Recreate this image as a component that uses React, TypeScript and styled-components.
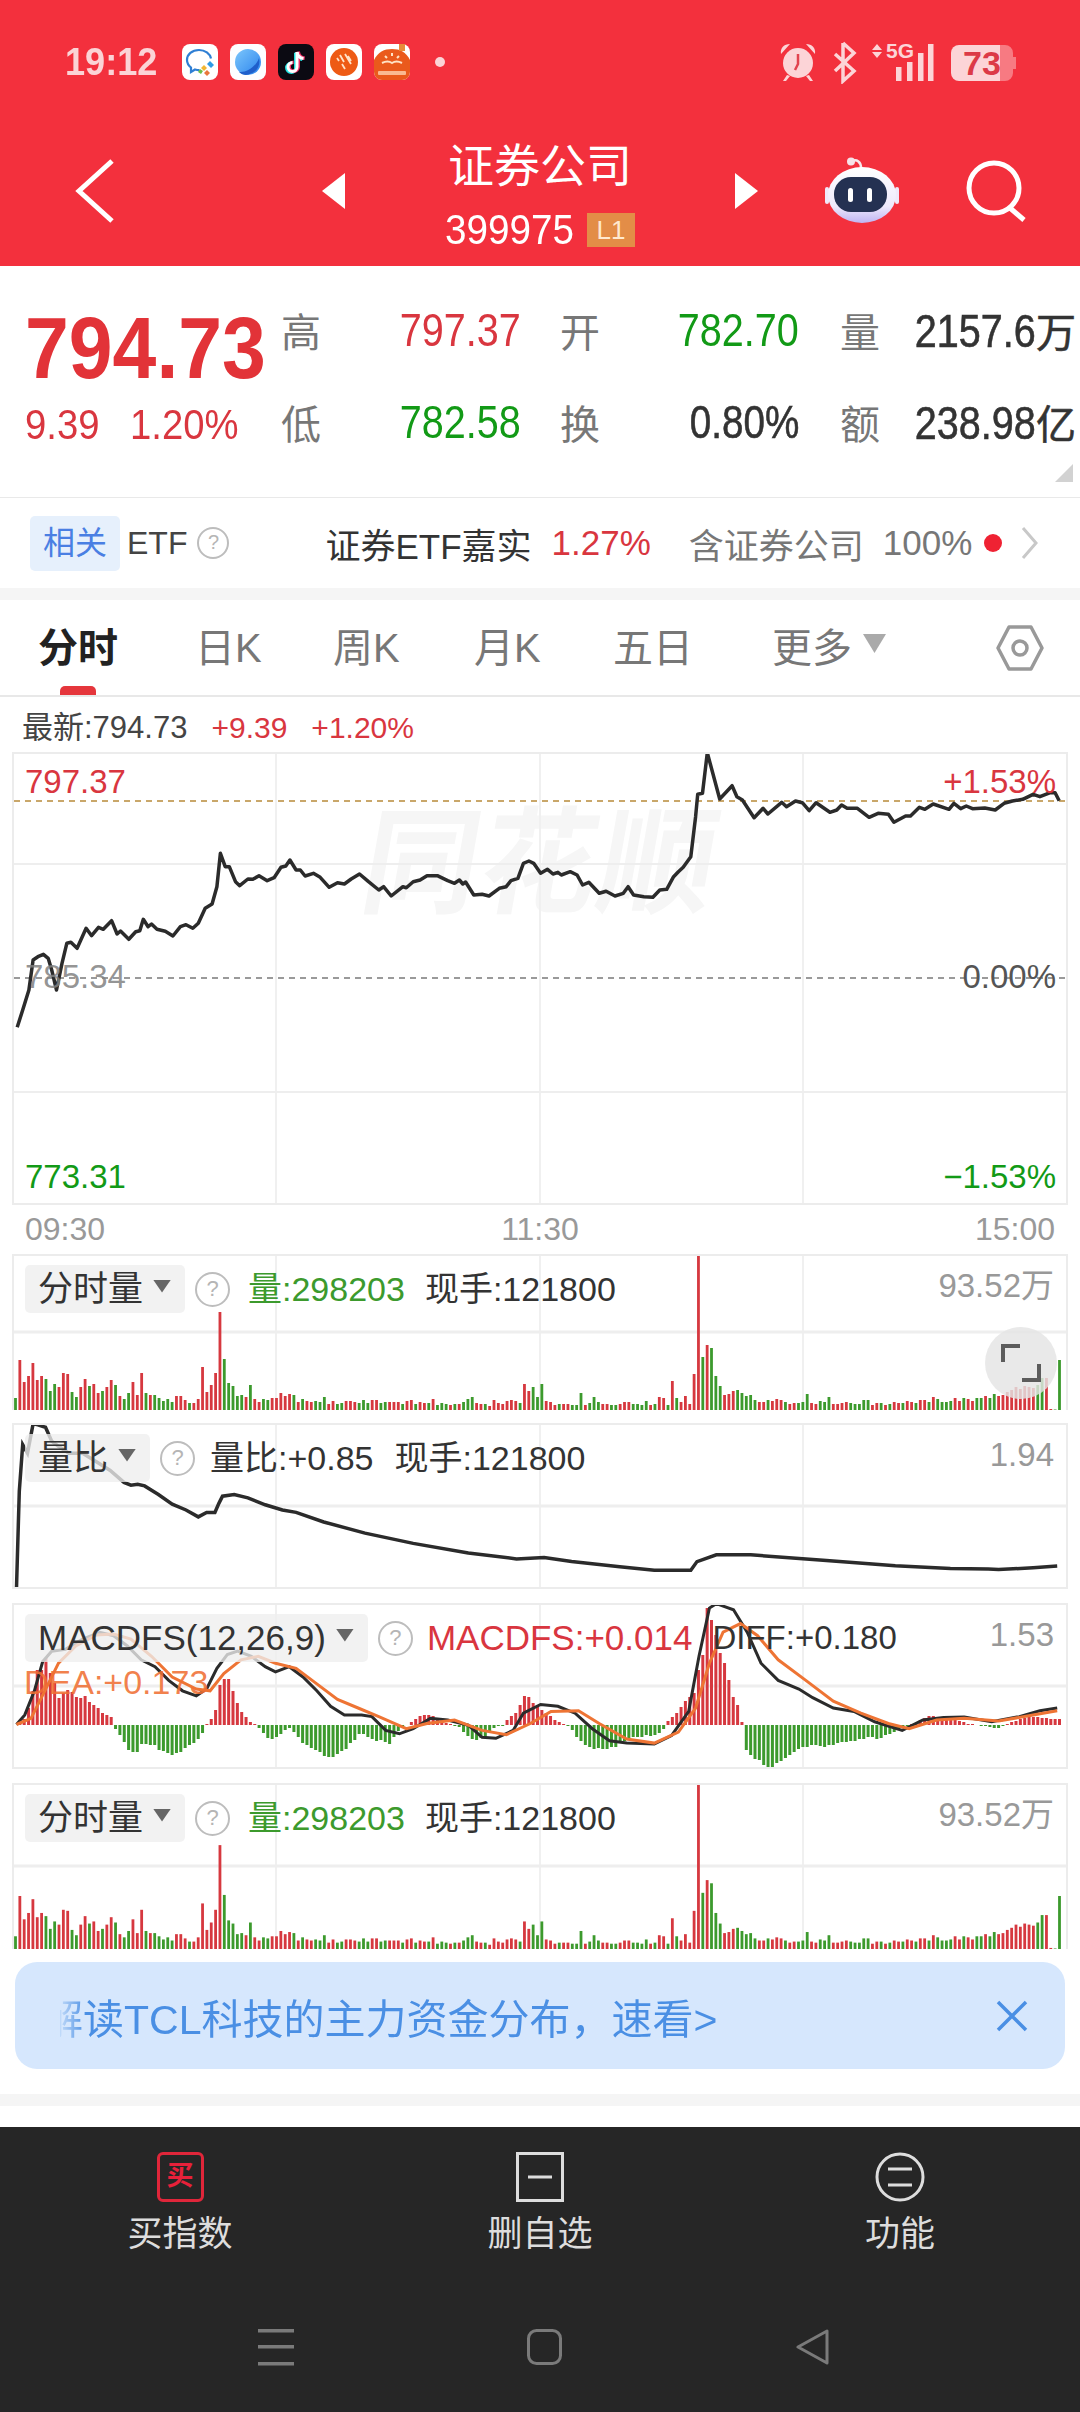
import React from "react";
import styled, { createGlobalStyle } from "styled-components";

const SANS = '"Liberation Sans", "Noto Sans CJK SC", sans-serif';
const RED = "#d9363f";
const GREEN = "#129a16";
const BAR_RED = "#d6383f";
const BAR_GREEN = "#3c9a2d";

// volume per minute, positive = red bar, negative = green bar
const VOL = [
  -12, 50, 28, 34, 47, 30, 34, -31, -19, -26, 23, 37, 36, -18, -13, 23, 31, -24, 26, 17, -19, 23, 30, -25, 14, -11, -17, 28, 15, 37,
  -17, 15, -15, -12, -9, -11, -8, 14, 14, 10, -7, 7, 11, 43, 18, 25, 37, 98, -51, -27, -24, -14, -15, 13, -25, 11, 8, -11, -10, 12,
  12, 17, 14, 16, -15, 8, -11, 9, 8, -9, -8, -13, 6, 9, -6, -7, 9, 9, 8, -7, -10, -7, 10, 10, -7, -8, 8, 8, 8, -6,
  9, 10, -6, 8, 7, -7, 11, -5, -7, -6, 5, -6, 6, -8, -11, -13, 7, 6, -6, 4, 10, 7, 6, 9, 10, 9, -7, 26, 19,
  -23, -13, -26, 9, 8, 5, -6, 6, 6, -5, -5, -17, 5, -7, -13, -8, 6, 6, -5, -5, 6, 8, 8, -6, -6, -5, -9, 5, -6, 13, 12, -5, 29, -12, 8, 14, 6, 36, 155,
  -53, 65, -62, -34, -24, 15, 16, 19, -20, -17, -14, -15, -10, 8, 8, -10, 9, 11, 10, -8, 6, 7, -7, -8, -16, 7, 6, -9, -8, -13, 6, 6, 7, 8, -7, -6, -6,
  -10, -10, 5, 7, -7, 5, -6, 8, 7, -7, 9, 8, -7, 10, 10, -8, 13, -11, -8, -8, -9, 12, 9, -12, 11, 9, -12, -12, 14, -12, -16, 14, 15, 18, 20, 23, 21,
  24, 23, 22, -25, -32, 32, 1, -0.5, -50,
];

const MACD = [
  0, 2, 6, 17, 34, 55, 55, 67, 52, 42, 27, 32, 35, 33, 28, 27, 29, 23, 20, 17, 12, 10, 8, -4, -10, -17, -25, -27, -27, -19,
  -19, -20, -20, -25, -26, -28, -30, -28, -27, -23, -20, -18, -14, -8, 1, 6, 15, 40, 46, 46, 34, 22, 13, 8, 3, 1, -3, -8, -13, -14,
  -12, -9, -5, -3, -7, -12, -18, -20, -23, -25, -27, -31, -32, -32, -29, -26, -24, -18, -15, -9, -9, -12, -14, -16, -15, -17, -19, -12, -6, -2,
  0, 3, 6, 9, 10, 10, 9, 7, 4, 2, 1, -1, -2, -7, -11, -14, -15, -13, -12, -7, -3, -1, -1, 5, 9, 12, 20, 29, 28, 22,
  20, 15, 12, 9, 5, 3, 1, -1, -5, -12, -16, -20, -22, -24, -23, -24, -24, -22, -22, -18, -16, -14, -12, -12, -12, -10, -11, -10, -8, -4,
  4, 8, 12, 18, 24, 28, 32, 55, 70, 117, 105, 90, 72, 62, 45, 28, 20, 3, -25, -30, -34, -35, -40, -42, -43, -38, -36, -33, -30, -27,
  -24, -22, -22, -20, -20, -21, -22, -20, -20, -18, -17, -17, -16, -16, -14, -14, -12, -12, -14, -13, -10, -9, -7, -5, -3, -1, 1, 2, 5, 7,
  9, 9, 8, 8, 7, 7, 5, 4, 3, 1, 1, 0, -1, -1, -2, -3, -3, -1, 1, 3, 4, 6, 7, 8, 8, 8, 7, 7, 6, 6, 6,
];

const PRICE_LINE = [
  [25, 892], [33, 840], [42, 780], [48, 690], [55, 680], [63, 673], [70, 685], [75, 720], [82, 780], [90, 700], [97, 640], [103, 637], [112, 655],
  [125, 595], [133, 617], [143, 592], [150, 598], [162, 572], [170, 612], [175, 603], [187, 628], [197, 605], [203, 602], [208, 568], [215, 590],
  [220, 582], [228, 598], [240, 604], [251, 618], [262, 590], [270, 584], [280, 595], [288, 580], [298, 535], [308, 522], [315, 470], [320, 370],
  [327, 410], [333, 410], [342, 455], [348, 467], [360, 447], [367, 448], [376, 437], [388, 452], [398, 443], [408, 412], [415, 408], [421, 390],
  [430, 420], [436, 420], [443, 438], [455, 430], [465, 442], [478, 472], [490, 458], [500, 462], [510, 447], [522, 432], [535, 455], [550, 480],
  [557, 470], [568, 498], [585, 470], [590, 473], [600, 455], [610, 450], [620, 437], [635, 437], [650, 452], [660, 460], [667, 450], [672, 462],
  [676, 456], [688, 495], [700, 493], [710, 498], [725, 475], [735, 470], [742, 452], [752, 445], [760, 400], [768, 393], [775, 400], [785, 430],
  [795, 418], [803, 432], [810, 427], [815, 435], [828, 425], [838, 435], [846, 465], [855, 457], [870, 490], [880, 484], [893, 498], [905, 490],
  [912, 470], [920, 495], [935, 500], [948, 502], [958, 480], [968, 478], [978, 440], [985, 425], [992, 412], [1003, 380], [1010, 260], [1013, 193],
  [1020, 190], [1027, 68], [1035, 130], [1045, 207], [1063, 167], [1070, 200], [1078, 210], [1095, 263], [1108, 235], [1115, 252], [1135, 217],
  [1142, 230], [1155, 213], [1165, 218], [1175, 242], [1185, 218], [1205, 247], [1215, 240], [1222, 225], [1230, 235], [1245, 235], [1262, 262],
  [1275, 250], [1290, 253], [1298, 277], [1315, 258], [1322, 258], [1335, 232], [1343, 238], [1355, 222], [1378, 238], [1385, 220], [1395, 236],
  [1403, 228], [1412, 236], [1430, 234], [1445, 240], [1458, 220], [1470, 213], [1485, 208], [1500, 193], [1510, 200], [1525, 188], [1532, 188], [1538, 212],
];

const RATIO_LINE = [
  [24, 980], [28, 700], [33, 565], [40, 590], [48, 505], [55, 508], [66, 515], [75, 555], [85, 570], [100, 590], [120, 590], [140, 615], [160, 640],
  [180, 675], [190, 683], [200, 680], [210, 685], [230, 710], [250, 738], [270, 755], [288, 775], [300, 762], [312, 762], [318, 735], [323, 715],
  [340, 710], [360, 720], [385, 740], [410, 755], [430, 762], [470, 790], [530, 822], [600, 852], [680, 880], [750, 897], [790, 893], [830, 905],
  [900, 920], [950, 930], [1003, 930], [1012, 905], [1040, 885], [1090, 885], [1200, 902], [1300, 917], [1380, 925], [1435, 926], [1450, 928], [1500, 923], [1535, 918],
];

const DIFF_LINE = [
  [24, 1378], [36, 1350], [50, 1280], [62, 1195], [75, 1165], [95, 1160], [120, 1130], [145, 1110], [165, 1120], [185, 1150], [205, 1190], [225, 1210],
  [245, 1250], [265, 1280], [285, 1295], [300, 1275], [315, 1215], [330, 1175], [345, 1165], [365, 1180], [385, 1210], [400, 1225], [420, 1210], [440, 1240],
  [460, 1280], [480, 1325], [500, 1350], [525, 1350], [540, 1355], [560, 1395], [580, 1405], [600, 1390], [625, 1360], [650, 1365], [680, 1380], [700, 1415],
  [720, 1418], [745, 1395], [760, 1345], [785, 1320], [810, 1325], [835, 1345], [860, 1390], [885, 1425], [910, 1432], [950, 1435], [975, 1410], [1000, 1340],
  [1015, 1180], [1030, 1040], [1040, 1027], [1065, 1045], [1085, 1110], [1105, 1200], [1130, 1250], [1160, 1275], [1180, 1300], [1210, 1330], [1240, 1340],
  [1270, 1370], [1310, 1395], [1340, 1365], [1370, 1358], [1400, 1356], [1440, 1370], [1480, 1355], [1510, 1338], [1535, 1330],
];

const DEA_LINE = [
  [24, 1378], [45, 1360], [65, 1280], [85, 1200], [110, 1150], [140, 1118], [165, 1115], [190, 1130], [220, 1180], [250, 1240], [285, 1275], [305, 1280],
  [325, 1230], [350, 1190], [375, 1180], [400, 1200], [430, 1215], [460, 1260], [490, 1305], [520, 1330], [550, 1355], [590, 1390], [620, 1375], [660, 1365],
  [700, 1395], [735, 1408], [770, 1375], [800, 1340], [840, 1338], [870, 1375], [910, 1420], [950, 1432], [985, 1400], [1010, 1330], [1030, 1200], [1050, 1110],
  [1075, 1085], [1100, 1120], [1130, 1190], [1170, 1250], [1210, 1310], [1250, 1345], [1290, 1375], [1320, 1390], [1360, 1365], [1400, 1360], [1450, 1368],
  [1500, 1350], [1535, 1338],
];

// traced from a 1.452x / fy zoom of the page, back to page coordinates
const toPoints = (list: number[][], y0: number, fy: number) =>
  list.map(([x, y]) => `${(x / 1.452).toFixed(1)},${(y0 + y / fy).toFixed(1)}`).join(" ");

const barX = (i: number) => 15.5 + 4.35 * i;

const GlobalStyle = createGlobalStyle`
  html, body { margin: 0; padding: 0; background: #fff; }
  body { font-family: ${SANS}; }
`;

const Page = styled.div`
  width: 1080px;
  height: 2412px;
  overflow: hidden;
  display: flex;
  flex-direction: column;
  background: #fff;
  color: #333;
`;

const Header = styled.header`
  height: 266px;
  background: #f3303d;
  flex: none;
`;

const StatusBar = styled.div`
  height: 124px;
  padding-left: 65px;
  display: flex;
  align-items: center;
`;

// the app's digits are narrower than Liberation's, this squeezes them
const Squeezed = styled.span<{ $sx: number; $origin?: string }>`
  display: inline-block;
  transform: scaleX(${(p) => p.$sx});
  transform-origin: ${(p) => p.$origin ?? "left"} center;
`;

const Clock = styled.span`
  font-size: 38px;
  font-weight: 700;
  color: #fbd3d6;
  width: 117px;
`;

const AppIcons = styled.div`
  display: flex;
  gap: 12px;
  align-items: center;
`;

const AppBox = styled.svg`
  width: 36px;
  height: 36px;
  display: block;
`;

const StatusDot = styled.span`
  width: 10px;
  height: 10px;
  border-radius: 50%;
  background: #fbd3d6;
  margin-left: 25px;
`;

const StatusRight = styled.svg`
  width: 250px;
  height: 44px;
  margin-left: 335px;
  flex: none;
`;

const Nav = styled.div`
  display: grid;
  grid-template-columns: 322px 436px 322px;
  height: 134px;
  align-items: center;
`;

const BackWrap = styled.div`
  padding: 4px 0 0 75px;
`;

const CenterGroup = styled.div`
  display: flex;
  align-items: center;
  justify-content: space-between;
`;

const TitleCol = styled.div`
  display: flex;
  flex-direction: column;
  align-items: center;
  color: #fff;
  margin-top: 11px;
`;

const Title = styled.div`
  font-size: 46px;
  line-height: 44px;
`;

const Code = styled.div`
  margin-top: 23px;
  height: 38px;
  display: flex;
  align-items: center;
  font-size: 42px;
`;

const CodeDigits = styled(Squeezed)`
  margin-right: -11px;
`;

const LevelTag = styled.span`
  width: 48px;
  height: 34px;
  margin-left: 13px;
  background: #e38d47;
  color: #ffe9cf;
  font-size: 26px;
  line-height: 34px;
  text-align: center;
`;

const NavRight = styled.div`
  display: flex;
  align-items: center;
  padding-left: 67px;
  gap: 66px;
`;

const Quote = styled.section`
  position: relative;
  flex: none;
  height: 232px;
  box-sizing: border-box;
  padding: 36px 4px 0 25px;
  border-bottom: 1px solid #e9e9e9;
`;

const QuoteRow = styled.div<{ $h: number }>`
  display: flex;
  height: ${(p) => p.$h}px;
`;

const PriceCell = styled.div`
  width: 256px;
  flex: none;
  font-weight: 700;
  font-size: 88px;
  line-height: 92px;
  color: #e23338;
`;

const ChangeCell = styled.div`
  width: 256px;
  flex: none;
  display: flex;
  gap: 21px;
  font-size: 43px;
  line-height: 60px;
  color: ${RED};
`;

const Stat = styled.div<{ $w: number; $gap?: number }>`
  width: ${(p) => p.$w}px;
  margin-left: ${(p) => p.$gap ?? 0}px;
  height: 56px;
  display: flex;
  justify-content: space-between;
  align-items: center;
  flex: none;
`;

const StatLabel = styled.span`
  font-size: 40px;
  color: #777;
`;

const StatValue = styled.span<{ $color?: string; $heavy?: boolean }>`
  font-size: 46px;
  color: ${(p) => p.$color ?? "#333"};
  -webkit-text-stroke: ${(p) => (p.$heavy ? "0.6px" : "0")};
  white-space: nowrap;
`;

const StatUnit = styled.span`
  font-size: 40px;
`;

const CornerMark = styled.span`
  position: absolute;
  right: 7px;
  bottom: 15px;
  width: 18px;
  height: 18px;
  background: #d2d2d2;
  clip-path: polygon(100% 0, 100% 100%, 0 100%);
`;

const EtfRow = styled.section`
  flex: none;
  height: 90px;
  padding-left: 30px;
  display: flex;
  align-items: center;
  font-size: 35px;
`;

const RelatedTag = styled.span`
  width: 90px;
  height: 55px;
  border-radius: 5px;
  background: #e6f0fc;
  color: #4a7fe3;
  font-size: 32px;
  line-height: 55px;
  text-align: center;
`;

const EtfText = styled.span`
  margin-left: 7px;
  color: #444;
  font-size: 32px;
`;

const Help = styled.span<{ $size: number; $gap?: number }>`
  width: ${(p) => p.$size}px;
  height: ${(p) => p.$size}px;
  margin-left: ${(p) => p.$gap ?? 10}px;
  box-sizing: border-box;
  border: 2.500px solid #bdbdbd;
  border-radius: 50%;
  color: #b5b5b5;
  font-size: ${(p) => Math.round(p.$size * 0.62)}px;
  line-height: ${(p) => p.$size - 5}px;
  text-align: center;
  flex: none;
`;

const FundName = styled.span`
  margin-left: 96px;
  color: #333;
`;

const FundPct = styled.span`
  margin-left: 20px;
  color: ${RED};
`;

const Holds = styled.span`
  margin-left: 38px;
  color: #777;
`;

const HoldPct = styled.span`
  margin-left: 19px;
  color: #777;
`;

const RedDot = styled.span`
  width: 18px;
  height: 18px;
  margin-left: 12px;
  border-radius: 50%;
  background: #ef2233;
`;

const EtfChevron = styled.svg`
  margin-left: 18px;
`;

const Band = styled.div`
  flex: none;
  height: 12px;
  background: #f5f5f5;
`;

const Tabs = styled.nav`
  flex: none;
  height: 97px;
  box-sizing: border-box;
  padding-left: 38px;
  display: flex;
  align-items: center;
  border-bottom: 2px solid #e8e8e8;
`;

const Tab = styled.div<{ $w: number; $active?: boolean }>`
  position: relative;
  width: ${(p) => p.$w}px;
  flex: none;
  height: 95px;
  line-height: 98px;
  font-size: 40px;
  color: ${(p) => (p.$active ? "#222" : "#777")};
  font-weight: ${(p) => (p.$active ? 700 : 400)};
  display: flex;
  align-items: center;

  &::after {
    content: "";
    display: ${(p) => (p.$active ? "block" : "none")};
    position: absolute;
    left: 22px;
    bottom: 0;
    width: 36px;
    height: 9px;
    border-radius: 5px 5px 0 0;
    background: #e5363c;
  }
`;

const MoreCaret = styled.span`
  width: 23px;
  height: 19px;
  margin: -8px 0 0 11px;
  background: #aaa;
  clip-path: polygon(0 0, 100% 0, 50% 100%);
`;

const Latest = styled.div`
  flex: none;
  height: 55px;
  padding: 10px 0 0 22px;
  box-sizing: border-box;
  display: flex;
  gap: 24px;
  font-size: 31px;
  line-height: 42px;
  color: #444;
`;

const LatestRed = styled.span`
  color: ${RED};
  font-size: 30px;
`;

const ChartWrap = styled.div`
  flex: none;
  margin: 0 12px;
`;

const Frame = styled.div<{ $h: number; $open?: boolean; $mb?: number }>`
  position: relative;
  box-sizing: border-box;
  height: ${(p) => p.$h}px;
  margin-bottom: ${(p) => p.$mb ?? 0}px;
  border: 2px solid #ececec;
  border-bottom: ${(p) => (p.$open ? "none" : "2px solid #ececec")};
`;

const Canvas = styled.svg`
  position: relative;
  display: block;
`;

const Watermark = styled.div`
  position: absolute;
  left: 350px;
  top: 48px;
  font-size: 116px;
  line-height: 124px;
  font-weight: 700;
  letter-spacing: 2px;
  color: #f6f6f6;
  transform: skewX(-10deg);
  white-space: nowrap;
`;

const ChartLabel = styled.span<{ $top: number; $right?: boolean; $color: string }>`
  position: absolute;
  top: ${(p) => p.$top}px;
  ${(p) => (p.$right ? "right: 10px;" : "left: 11px;")}
  font-size: 33px;
  line-height: 38px;
  color: ${(p) => p.$color};
`;

const TimeAxis = styled.div`
  flex: none;
  height: 49px;
  padding: 0 25px;
  display: flex;
  justify-content: space-between;
  align-items: center;
  font-size: 32px;
  color: #999;
`;

const PanelHead = styled.div`
  position: absolute;
  top: 9px;
  left: 11px;
  right: 12px;
  display: flex;
  align-items: center;
  font-size: 34px;
  line-height: 48px;
  color: #333;
`;

const Chip = styled.div`
  height: 48px;
  padding: 0 14px 0 13px;
  display: flex;
  align-items: center;
  gap: 10px;
  border-radius: 5px;
  background: rgba(238, 238, 238, 0.78);
  color: #333;
  font-size: 35px;
`;

const Caret = styled.span`
  width: 18px;
  height: 13px;
  margin-top: -6px;
  background: #666;
  clip-path: polygon(0 0, 100% 0, 50% 100%);
`;

const Reading = styled.span<{ $color?: string; $gap?: number; $size?: number }>`
  margin-left: ${(p) => p.$gap ?? 18}px;
  color: ${(p) => p.$color ?? "#333"};
  font-size: ${(p) => p.$size ?? 34}px;
  white-space: nowrap;
`;

const Scale = styled.span`
  margin: -6px 0 0 auto;
  color: #999;
  font-size: 33px;
  white-space: nowrap;
`;

const DeaText = styled.span`
  position: absolute;
  left: 10px;
  top: 57px;
  font-size: 34px;
  line-height: 40px;
  color: rgba(240, 112, 52, 0.88);
`;

const ExpandButton = styled.div`
  position: absolute;
  left: 971px;
  top: 71px;
  width: 72px;
  height: 72px;
  border-radius: 50%;
  background: rgba(228, 228, 228, 0.82);
  display: flex;
  align-items: center;
  justify-content: center;
`;

const Banner = styled.div`
  flex: none;
  height: 107px;
  margin: 13px 15px 25px;
  border-radius: 22px;
  background: #d6e7fd;
  display: flex;
  align-items: center;
  justify-content: space-between;
  padding: 0 37px 0 45px;
`;

const BannerClip = styled.div`
  width: 700px;
  overflow: hidden;
  white-space: nowrap;
  font-size: 41px;
  color: #4a8fe4;
  -webkit-mask-image: linear-gradient(90deg, rgba(0, 0, 0, 0.15), #000 26px);
  mask-image: linear-gradient(90deg, rgba(0, 0, 0, 0.15), #000 26px);
`;

const BannerText = styled.span`
  margin-left: -18px;
  display: inline-block;
`;

const BottomBar = styled.footer`
  flex: none;
  margin-top: 21px;
  height: 285px;
  background: #262626;
  display: flex;
  flex-direction: column;
`;

const Actions = styled.div`
  display: grid;
  grid-template-columns: repeat(3, 360px);
  padding-top: 25px;
`;

const Action = styled.div`
  display: flex;
  flex-direction: column;
  align-items: center;
  color: #ddd;
  font-size: 35px;
  line-height: 42px;
  gap: 11px;
`;

const BuyIcon = styled.span`
  width: 47px;
  height: 50px;
  box-sizing: border-box;
  border: 3px solid #e0263a;
  border-radius: 6px;
  color: #e8213a;
  font-size: 27px;
  font-weight: 700;
  line-height: 42px;
  text-align: center;
`;

const SystemNav = styled.div`
  margin-top: 73px;
  padding-left: 258px;
  display: flex;
  align-items: center;
  gap: 233px;
`;

const ChartFrameSvg: React.FC<{ top: number; h: number; gridY?: number; children?: React.ReactNode }> = ({ top, h, gridY, children }) => (
  <Canvas width={1052} height={h} viewBox={`14 ${top} 1052 ${h}`}>
    {[276, 540, 803].map((x) => (
      <line key={x} x1={x} x2={x} y1={top} y2={top + h} stroke="#f0f0f0" strokeWidth={2} />
    ))}
    {gridY !== undefined && <line x1={14} x2={1066} y1={gridY} y2={gridY} stroke="#eeeeee" strokeWidth={3} />}
    {children}
  </Canvas>
);

const VolumeBars: React.FC<{ base: number; scale: number; cap: number }> = ({ base, scale, cap }) => (
  <>
    {VOL.map((v, i) => {
      const h = Math.min(Math.abs(v) * scale, cap);
      return <rect key={i} x={barX(i) - 1.4} y={base - h} width={2.8} height={h} fill={v > 0 ? BAR_RED : BAR_GREEN} />;
    })}
  </>
);

const Expand = () => (
  <svg width="40" height="40" viewBox="0 0 40 40" fill="none" stroke="#5c5c5c" strokeWidth="4">
    <path d="M2 19V3h17" />
    <path d="M38 21v16H21" />
  </svg>
);

const BackChevron = () => (
  <svg width="40" height="66" viewBox="0 0 40 66" fill="none" stroke="#fff" strokeWidth="5">
    <path d="M37 3 4 33l33 30" />
  </svg>
);

const Arrow: React.FC<{ flip?: boolean }> = ({ flip }) => (
  <svg width="23" height="36" viewBox="0 0 23 36" fill="#fff">
    <path d={flip ? "M0 0 23 18 0 36z" : "M23 0 0 18 23 36z"} />
  </svg>
);

const Robot = () => (
  <svg width="74" height="68" viewBox="0 0 74 68">
    <defs>
      <linearGradient id="head" x1="0" y1="0" x2="0" y2="1">
        <stop offset="0" stopColor="#ffffff" />
        <stop offset="0.7" stopColor="#eeeafc" />
        <stop offset="1" stopColor="#bfb4f2" />
      </linearGradient>
    </defs>
    <path d="M27 4c5-2 9 1 9 7" fill="none" stroke="#f6e8ec" strokeWidth="2.500" />
    <circle cx="26" cy="4.500" r="4" fill="#f6e2e8" />
    <rect x="0" y="30" width="4" height="17" rx="2" fill="#f0e9fa" />
    <rect x="70" y="30" width="4" height="17" rx="2" fill="#f0e9fa" />
    <ellipse cx="37" cy="38" rx="34" ry="28" fill="url(#head)" />
    <rect x="9" y="20" width="53" height="35" rx="17" fill="#243152" />
    <rect x="23" y="31" width="5" height="14" rx="2.500" fill="#fff" />
    <rect x="42" y="31" width="5" height="14" rx="2.500" fill="#fff" />
  </svg>
);

const SearchIcon = () => (
  <svg width="62" height="62" viewBox="0 0 62 62" fill="none" stroke="#fff" strokeWidth="5">
    <circle cx="29" cy="28" r="25" />
    <path d="M45 48 59 60" />
  </svg>
);

const WeComIcon = () => (
  <AppBox viewBox="0 0 36 36">
    <rect width="36" height="36" rx="8" fill="#fff" />
    <path d="M17 6C10 6 5 10.500 5 16c0 3 1.500 5.500 4 7.500V28l4-2.500c1.500.5 3 .7 4.500.7" fill="none" stroke="#2f7fd4" strokeWidth="2.200" />
    <path d="M17 6c6 0 11 3.500 12 8.500" fill="none" stroke="#2f7fd4" strokeWidth="2.200" />
    <path d="m28 17 4 4-3 3-4-4z" fill="#2e9ae6" />
    <path d="m22 21 3 3-3 3-3-3z" fill="#f2b632" />
    <path d="m25 26 3 3-3 3-3-3z" fill="#e9773b" />
    <path d="m18 25 3 2-2 3-3-2z" fill="#6dbf4b" />
  </AppBox>
);

const PlanetIcon = () => (
  <AppBox viewBox="0 0 36 36">
    <defs>
      <linearGradient id="planet" x1="0" y1="0" x2="1" y2="1">
        <stop offset="0" stopColor="#7cc6fb" />
        <stop offset="1" stopColor="#2b84ee" />
      </linearGradient>
    </defs>
    <rect width="36" height="36" rx="8" fill="#fdfdff" />
    <circle cx="18" cy="18" r="13" fill="url(#planet)" />
    <path d="M9 28c7 1 17-5 20-14 2 8-3 16-13 17-3 0-5-1-7-3z" fill="#1f5fcb" />
  </AppBox>
);

const TikTokIcon = () => (
  <AppBox viewBox="0 0 36 36">
    <rect width="36" height="36" rx="8" fill="#0b0a12" />
    <path d="M19 8v15a4.500 4.500 0 1 1-4.500-4.500" fill="none" stroke="#25e6e6" strokeWidth="3.500" transform="translate(-1.200 .8)" />
    <path d="M19 8c.5 4 3 6 6.500 6.500" fill="none" stroke="#25e6e6" strokeWidth="3.500" transform="translate(-1.200 .8)" />
    <path d="M19 8v15a4.500 4.500 0 1 1-4.500-4.500" fill="none" stroke="#f0336b" strokeWidth="3.500" transform="translate(1.200 -.2)" />
    <path d="M19 8c.5 4 3 6 6.500 6.500" fill="none" stroke="#f0336b" strokeWidth="3.500" transform="translate(1.200 -.2)" />
    <path d="M19 8v15a4.500 4.500 0 1 1-4.500-4.500" fill="none" stroke="#fff" strokeWidth="3" />
    <path d="M19 8c.5 4 3 6 6.500 6.500" fill="none" stroke="#fff" strokeWidth="3" />
  </AppBox>
);

const OrangeIcon = () => (
  <AppBox viewBox="0 0 36 36">
    <rect width="36" height="36" rx="8" fill="#fff" />
    <circle cx="18" cy="18" r="14" fill="#ee5a14" />
    <path d="m11 14 2 3M14 11l4 7M19 10l6 10M16 20l3 5M22 12l3 5" stroke="#ffe2c8" strokeWidth="1.800" />
  </AppBox>
);

const BookIcon = () => (
  <AppBox viewBox="0 0 36 36">
    <rect width="36" height="36" rx="8" fill="#fff" />
    <path d="M0 16C4 8 10 5 18 5s14 3 18 11v12a8 8 0 0 1-8 8H8a8 8 0 0 1-8-8z" fill="#ea5a1c" />
    <rect x="25" y="0" width="6" height="7" fill="#e88b3a" />
    <path d="M8 19c4-2 7-2 10 0 3-2 6-2 10 0M11 12l2 2M18 9v3M25 12l-2 2" fill="none" stroke="#ffe3c6" strokeWidth="2" />
    <rect x="4" y="27" width="28" height="4" rx="1" fill="#ffd9b8" opacity=".75" />
  </AppBox>
);

const StatusIcons = () => (
  <StatusRight viewBox="780 40 250 44">
    <g fill="#fcd4d7">
      <circle cx="798" cy="63" r="15" />
      <path d="M781 54c-1-6 3-10 9-10zM815 54c1-6-3-10-9-10z" />
      <path d="m787 75-4 6h3l4-5zm22 0 4 6h-3l-4-5z" />
      <path d="M798 54v10l-3 6" fill="none" stroke="#e2434f" strokeWidth="2.500" />
      <path d="M843 43v38l11-10-19-17M843 43l11 10-19 18" fill="none" stroke="#fcd4d7" strokeWidth="3.500" />
      <path d="m877 44 5 6h-10zM877 58l5-6h-10z" />
      <text x="886" y="58" fontFamily={SANS} fontSize="21" fontWeight="700">5G</text>
      <rect x="896" y="67" width="5.500" height="14" />
      <rect x="907" y="62" width="5.500" height="19" />
      <rect x="918" y="53" width="5.500" height="28" />
      <rect x="928" y="44" width="5.500" height="37" />
      <path d="M951 53a8 8 0 0 1 8-8h41v36h-41a8 8 0 0 1-8-8z" />
      <path d="M1000 45h5a8 8 0 0 1 8 8v4h3v12h-3v4a8 8 0 0 1-8 8h-5z" opacity=".45" />
      <text x="963" y="75" fontFamily={SANS} fontSize="34" fontWeight="700" fill="#dc3a47">73</text>
    </g>
  </StatusRight>
);

export default function App() {
  const panelTop = { first: 1256, second: 1425, third: 1605, fourth: 1785 };
  return (
    <Page>
      <GlobalStyle />
      <Header>
        <StatusBar>
          <Clock>
            <Squeezed $sx={0.95}>19:12</Squeezed>
          </Clock>
          <AppIcons>
            <WeComIcon />
            <PlanetIcon />
            <TikTokIcon />
            <OrangeIcon />
            <BookIcon />
          </AppIcons>
          <StatusDot />
          <StatusIcons />
        </StatusBar>
        <Nav>
          <BackWrap>
            <BackChevron />
          </BackWrap>
          <CenterGroup>
            <Arrow />
            <TitleCol>
              <Title>证券公司</Title>
              <Code>
                <CodeDigits $sx={0.92}>399975</CodeDigits>
                <LevelTag>L1</LevelTag>
              </Code>
            </TitleCol>
            <Arrow flip />
          </CenterGroup>
          <NavRight>
            <Robot />
            <SearchIcon />
          </NavRight>
        </Nav>
      </Header>

      <Quote>
        <QuoteRow $h={92}>
          <PriceCell>
            <Squeezed $sx={0.895}>794.73</Squeezed>
          </PriceCell>
          <Stat $w={240}>
            <StatLabel>高</StatLabel>
            <StatValue $color={RED}>
              <Squeezed $sx={0.86} $origin="right">797.37</Squeezed>
            </StatValue>
          </Stat>
          <Stat $w={239} $gap={39}>
            <StatLabel>开</StatLabel>
            <StatValue $color={GREEN}>
              <Squeezed $sx={0.86} $origin="right">782.70</Squeezed>
            </StatValue>
          </Stat>
          <Stat $w={236} $gap={41}>
            <StatLabel>量</StatLabel>
            <StatValue $heavy>
              <Squeezed $sx={0.86} $origin="right">2157.6</Squeezed>
              <StatUnit>万</StatUnit>
            </StatValue>
          </Stat>
        </QuoteRow>
        <QuoteRow $h={60}>
          <ChangeCell>
            <Squeezed $sx={0.89}>9.39</Squeezed>
            <Squeezed $sx={0.89}>1.20%</Squeezed>
          </ChangeCell>
          <Stat $w={240}>
            <StatLabel>低</StatLabel>
            <StatValue $color={GREEN}>
              <Squeezed $sx={0.86} $origin="right">782.58</Squeezed>
            </StatValue>
          </Stat>
          <Stat $w={239} $gap={39}>
            <StatLabel>换</StatLabel>
            <StatValue $heavy>
              <Squeezed $sx={0.84} $origin="right">0.80%</Squeezed>
            </StatValue>
          </Stat>
          <Stat $w={236} $gap={41}>
            <StatLabel>额</StatLabel>
            <StatValue $heavy>
              <Squeezed $sx={0.86} $origin="right">238.98</Squeezed>
              <StatUnit>亿</StatUnit>
            </StatValue>
          </Stat>
        </QuoteRow>
        <CornerMark />
      </Quote>

      <EtfRow>
        <RelatedTag>相关</RelatedTag>
        <EtfText>ETF</EtfText>
        <Help $size={32}>?</Help>
        <FundName>证券ETF嘉实</FundName>
        <FundPct>1.27%</FundPct>
        <Holds>含证券公司</Holds>
        <HoldPct>100%</HoldPct>
        <RedDot />
        <EtfChevron width="20" height="34" viewBox="0 0 20 34" fill="none" stroke="#c8c8c8" strokeWidth="3">
          <path d="M3 2 16 17 3 32" />
        </EtfChevron>
      </EtfRow>
      <Band />

      <Tabs>
        <Tab $w={157} $active>分时</Tab>
        <Tab $w={138}>日K</Tab>
        <Tab $w={141}>周K</Tab>
        <Tab $w={139}>月K</Tab>
        <Tab $w={159}>五日</Tab>
        <Tab $w={224}>
          更多
          <MoreCaret />
        </Tab>
        <svg width="48" height="48" viewBox="0 0 48 48" fill="none" stroke="#999" strokeWidth="3.500" strokeLinejoin="round">
          <path d="M13 3h22l11 21-11 21H13L2 24z" />
          <circle cx="24" cy="24" r="7" />
        </svg>
      </Tabs>

      <Latest>
        <span>最新:794.73</span>
        <LatestRed>+9.39</LatestRed>
        <LatestRed>+1.20%</LatestRed>
      </Latest>

      <ChartWrap>
        <Frame $h={453}>
          <Watermark>同花顺</Watermark>
          <ChartFrameSvg top={754} h={449}>
            <line x1={14} x2={1066} y1={864} y2={864} stroke="#eeeeee" strokeWidth={2} />
            <line x1={14} x2={1066} y1={1092} y2={1092} stroke="#eeeeee" strokeWidth={2} />
            <line x1={14} x2={1066} y1={801} y2={801} stroke="#c9a76a" strokeWidth={2} strokeDasharray="6 5" />
            <line x1={14} x2={1066} y1={978} y2={978} stroke="#9a9a9a" strokeWidth={2} strokeDasharray="6 5" />
            <polyline points={toPoints(PRICE_LINE, 730, 3)} fill="none" stroke="#2b2b2b" strokeWidth={3.5} strokeLinejoin="round" />
          </ChartFrameSvg>
          <ChartLabel $top={9} $color={RED}>797.37</ChartLabel>
          <ChartLabel $top={9} $right $color={RED}>+1.53%</ChartLabel>
          <ChartLabel $top={204} $color="rgba(130,130,130,.85)">785.34</ChartLabel>
          <ChartLabel $top={204} $right $color="#555">0.00%</ChartLabel>
          <ChartLabel $top={404} $color={GREEN}>773.31</ChartLabel>
          <ChartLabel $top={404} $right $color={GREEN}>−1.53%</ChartLabel>
        </Frame>
      </ChartWrap>
      <TimeAxis>
        <span>09:30</span>
        <span>11:30</span>
        <span>15:00</span>
      </TimeAxis>

      <ChartWrap>
        <Frame $h={156} $open $mb={13}>
          <ChartFrameSvg top={panelTop.first} h={154} gridY={1332}>
            <VolumeBars base={1410} scale={1} cap={155} />
          </ChartFrameSvg>
          <PanelHead>
            <Chip>
              分时量
              <Caret />
            </Chip>
            <Help $size={35}>?</Help>
            <Reading $color="#3c9a2d">量:298203</Reading>
            <Reading $gap={20}>现手:121800</Reading>
            <Scale>93.52万</Scale>
          </PanelHead>
          <ExpandButton>
            <Expand />
          </ExpandButton>
        </Frame>

        <Frame $h={166} $mb={14}>
          <ChartFrameSvg top={panelTop.second} h={162} gridY={1506}>
            <polyline points={toPoints(RATIO_LINE, 1250, 2.904)} fill="none" stroke="#2b2b2b" strokeWidth={3.5} />
          </ChartFrameSvg>
          <PanelHead>
            <Chip>
              量比
              <Caret />
            </Chip>
            <Help $size={35}>?</Help>
            <Reading $gap={15}>量比:+0.85</Reading>
            <Reading $gap={21}>现手:121800</Reading>
            <Scale>1.94</Scale>
          </PanelHead>
        </Frame>

        <Frame $h={166} $mb={14}>
          <ChartFrameSvg top={panelTop.third} h={162} gridY={1686}>
            {MACD.map((v, i) => {
              const h = Math.abs(v);
              return <rect key={i} x={barX(i) - 1.5} y={v > 0 ? 1725 - h : 1725} width={3} height={h} fill={v > 0 ? BAR_RED : BAR_GREEN} />;
            })}
            <polyline points={toPoints(DIFF_LINE, 1250, 2.904)} fill="none" stroke="#2b2b2b" strokeWidth={3} />
            <polyline points={toPoints(DEA_LINE, 1250, 2.904)} fill="none" stroke="#ee7434" strokeWidth={3} />
          </ChartFrameSvg>
          <PanelHead>
            <Chip>
              MACDFS(12,26,9)
              <Caret />
            </Chip>
            <Help $size={35}>?</Help>
            <Reading $color={RED} $size={35} $gap={14}>MACDFS:+0.014</Reading>
            <Reading $gap={20} $size={33}>DIFF:+0.180</Reading>
            <Scale>1.53</Scale>
          </PanelHead>
          <DeaText>DEA:+0.173</DeaText>
        </Frame>

        <Frame $h={166} $open>
          <ChartFrameSvg top={panelTop.fourth} h={164} gridY={1866}>
            <VolumeBars base={1949} scale={1.06} cap={166} />
          </ChartFrameSvg>
          <PanelHead>
            <Chip>
              分时量
              <Caret />
            </Chip>
            <Help $size={35}>?</Help>
            <Reading $color="#3c9a2d">量:298203</Reading>
            <Reading $gap={20}>现手:121800</Reading>
            <Scale>93.52万</Scale>
          </PanelHead>
        </Frame>
      </ChartWrap>

      <Banner>
        <BannerClip>
          <BannerText>解读TCL科技的主力资金分布，速看&gt;</BannerText>
        </BannerClip>
        <svg width="32" height="32" viewBox="0 0 32 32" fill="none" stroke="#4a8fe4" strokeWidth="3.500">
          <path d="m2 2 28 28M30 2 2 30" />
        </svg>
      </Banner>
      <Band />

      <BottomBar>
        <Actions>
          <Action>
            <BuyIcon>买</BuyIcon>
            买指数
          </Action>
          <Action>
            <svg width="48" height="50" viewBox="0 0 48 50" fill="none" stroke="#ddd" strokeWidth="3">
              <rect x="1.500" y="1.500" width="45" height="47" />
              <path d="M12 25h24" />
            </svg>
            删自选
          </Action>
          <Action>
            <svg width="50" height="50" viewBox="0 0 50 50" fill="none" stroke="#ddd" strokeWidth="3">
              <circle cx="25" cy="25" r="23" />
              <path d="M13 17h24M13 33h24" />
            </svg>
            功能
          </Action>
        </Actions>
        <SystemNav>
          <svg width="36" height="38" viewBox="0 0 36 38" fill="#7a7a7a">
            <rect y="1" width="36" height="3.500" />
            <rect y="17" width="36" height="3.500" />
            <rect y="34" width="36" height="3.500" />
          </svg>
          <svg width="35" height="36" viewBox="0 0 35 36" fill="none" stroke="#7a7a7a" strokeWidth="3">
            <rect x="1.500" y="1.500" width="32" height="33" rx="8" />
          </svg>
          <svg width="34" height="36" viewBox="0 0 34 36" fill="none" stroke="#7a7a7a" strokeWidth="3" strokeLinejoin="round">
            <path d="M32 2v32L3 18z" />
          </svg>
        </SystemNav>
      </BottomBar>
    </Page>
  );
}
